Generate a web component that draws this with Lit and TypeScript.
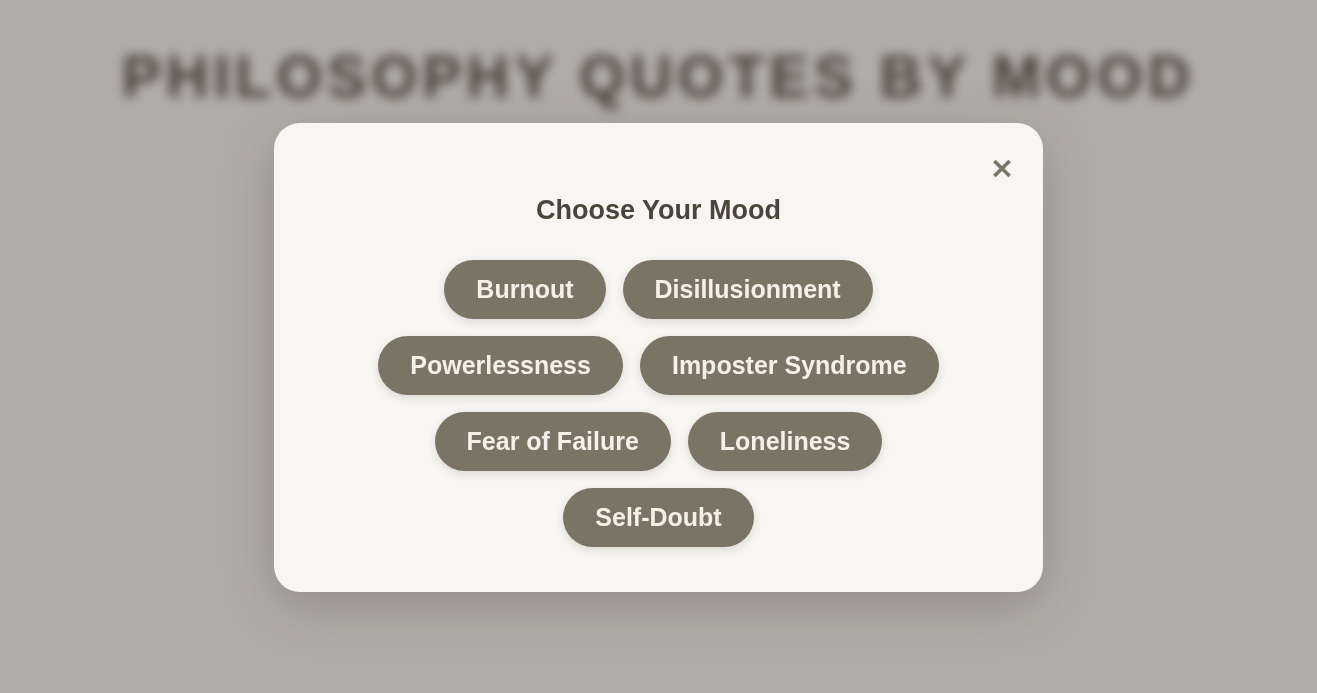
import { LitElement, html, css } from "lit";
import { customElement, state } from "lit/decorators.js";

const MOODS = [
  "Burnout",
  "Disillusionment",
  "Powerlessness",
  "Imposter Syndrome",
  "Fear of Failure",
  "Loneliness",
  "Self-Doubt",
];

@customElement("app-root")
export class AppRoot extends LitElement {
  @state() private open = true;
  @state() private mood = "";

  static styles = css`
    :host {
      display: block;
      min-height: 100vh;
      background: #f5f3ee;
      font-family: "Liberation Sans", Arial, sans-serif;
      color: #4b443b;
    }
    .page {
      padding: 43px 24px;
      text-align: center;
    }
    .title {
      margin: 0;
      font-size: 59px;
      line-height: 68px;
      font-weight: 700;
      letter-spacing: 5px;
      text-transform: uppercase;
      color: #4d443c;
    }
    .overlay {
      position: fixed;
      inset: 0;
      display: flex;
      align-items: center;
      justify-content: center;
      padding: 24px;
      background: rgba(56, 51, 42, 0.36);
      backdrop-filter: blur(6px);
    }
    .dialog {
      display: flex;
      flex-direction: column;
      box-sizing: border-box;
      width: 100%;
      max-width: 769px;
      margin-top: 22px;
      padding: 29px 24px 45px;
      border-radius: 26px;
      background: #f7f6f2;
      box-shadow: 0 13px 52px rgba(60, 51, 40, 0.28);
    }
    .close {
      align-self: flex-end;
      display: grid;
      place-items: center;
      width: 34px;
      height: 34px;
      padding: 0;
      border: 0;
      background: none;
      color: #7a7465;
      cursor: pointer;
    }
    .heading {
      margin: 8px 0 34px;
      font-size: 27px;
      line-height: 32px;
      font-weight: 700;
      text-align: center;
    }
    .moods {
      display: flex;
      flex-wrap: wrap;
      justify-content: center;
      gap: 17px;
      padding: 0 72px;
    }
    .mood {
      padding: 14px 32px;
      border: 0;
      border-radius: 30px;
      background: #7a7465;
      color: #f5f1e8;
      font-family: inherit;
      font-size: 25px;
      line-height: 31px;
      font-weight: 700;
      box-shadow: 0 3px 10px rgba(60, 53, 40, 0.14);
      cursor: pointer;
    }
  `;

  private choose(mood: string) {
    this.mood = mood;
    this.open = false;
  }

  render() {
    return html`
      <main class="page"><h1 class="title">Philosophy Quotes by Mood</h1></main>
      ${this.open
        ? html`<div class="overlay">
            <section class="dialog" role="dialog" aria-modal="true" aria-labelledby="heading">
              <button class="close" aria-label="Close" @click=${() => (this.open = false)}>
                <svg width="20" height="20" viewBox="0 0 20 20" fill="none" stroke="currentColor" stroke-width="3.6">
                  <path d="M2.4 1.9 17.6 17.1M17.6 1.9 2.4 17.1" />
                </svg>
              </button>
              <h2 class="heading" id="heading">Choose Your Mood</h2>
              <div class="moods">
                ${MOODS.map((m) => html`<button class="mood" @click=${() => this.choose(m)}>${m}</button>`)}
              </div>
            </section>
          </div>`
        : ""}
    `;
  }
}
